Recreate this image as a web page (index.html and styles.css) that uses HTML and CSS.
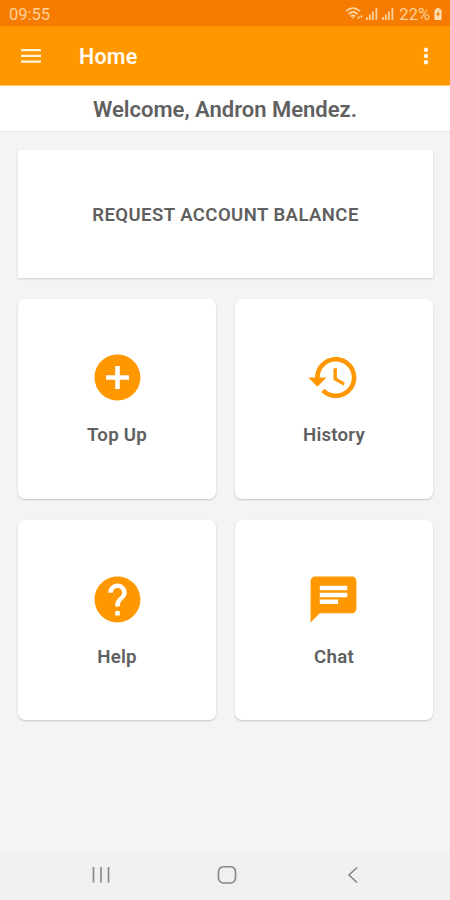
FILE: index.html
```
<!DOCTYPE html>
<html lang="en">
<head>
<meta charset="utf-8">
<title>Home</title>
<link rel="stylesheet" href="styles.css">
</head>
<body>
<div class="status">
  <span class="time">09:55</span>
  <div class="status-right">
    <svg width="20" height="16" viewBox="0 0 20 16" fill="none" stroke="currentColor" stroke-width="1.7"><path d="M1 5.2Q8 -1 15 5.2M3.5 8Q8 4 12.5 8M5.7 10.5Q8 8.5 10.3 10.5"/><path d="M7 11.3h2L8 13zM12 12.5l2-3 1 3zM15 9.5h3l-1.5 3z" fill="currentColor" stroke="none"/></svg>
    <svg width="14" height="16" viewBox="0 0 14 16" fill="currentColor"><path d="M1 11h1.800v3H1zM4 8.500h1.800V14H4zM7 5.500h1.800V14H7zM10.500 2h1.800v12h-1.800z"/></svg>
    <svg class="signal" width="14" height="16" viewBox="0 0 14 16" fill="currentColor"><path d="M1 11h1.800v3H1zM4 8.500h1.800V14H4zM7 5.500h1.800V14H7zM10.500 2h1.800v12h-1.800z"/></svg>
    <span class="percent">22%</span>
    <svg class="battery" width="10" height="14" viewBox="0 0 9 14"><path d="M3 1h3v1.500h2V13H1V2.500h2z" fill="#ffdfb5"/><path d="M5 3.500L2.700 8h1.500v2.500L6.400 6.500H5z" fill="#f57c00"/></svg>
  </div>
</div>
<header class="appbar">
  <svg class="menu" width="20" height="14" viewBox="0 0 20 14" fill="#fff4d8"><path d="M0 0h20v2.300H0zM0 5.700h20V8H0zM0 11.400h20v2.300H0z"/></svg>
  <h1>Home</h1>
  <svg class="more" width="6" height="18" viewBox="0 0 6 18" fill="#fff8e8"><circle cx="3" cy="2.700" r="2.200"/><circle cx="3" cy="9" r="2.200"/><circle cx="3" cy="15.300" r="2.200"/></svg>
</header>
<div class="welcome">Welcome, Andron Mendez.</div>
<main>
  <div class="request">REQUEST ACCOUNT BALANCE</div>
  <div class="grid">
    <div class="card">
      <svg class="icon" viewBox="0 0 24 24"><path d="M12 2C6.480 2 2 6.480 2 12s4.480 10 10 10 10-4.480 10-10S17.520 2 12 2zm5 11h-4v4h-2v-4H7v-2h4V7h2v4h4v2z"/></svg>
      <span class="topup">Top Up</span>
    </div>
    <div class="card">
      <svg class="icon" viewBox="0 0 24 24"><path d="M13 3c-4.970 0-9 4.030-9 9H1l3.890 3.890.07.14L9 12H6c0-3.870 3.130-7 7-7s7 3.130 7 7-3.130 7-7 7c-1.930 0-3.680-.79-4.940-2.060l-1.420 1.420C8.270 19.990 10.510 21 13 21c4.970 0 9-4.030 9-9s-4.030-9-9-9zm-1 5v5l4.280 2.540.72-1.210-3.500-2.080V8H12z"/></svg>
      <span>History</span>
    </div>
    <div class="card">
      <svg class="icon" viewBox="0 0 24 24"><path d="M12 2C6.480 2 2 6.480 2 12s4.480 10 10 10 10-4.480 10-10S17.520 2 12 2zm1 17h-2v-2h2v2zm2.070-7.750l-.9.920C13.450 12.900 13 13.500 13 15h-2v-.5c0-1.100.45-2.100 1.170-2.830l1.240-1.260c.37-.36.59-.86.59-1.410 0-1.100-.9-2-2-2s-2 .9-2 2H8c0-2.210 1.790-4 4-4s4 1.790 4 4c0 .88-.36 1.680-.93 2.250z"/></svg>
      <span>Help</span>
    </div>
    <div class="card">
      <svg class="icon" viewBox="0 0 24 24" preserveAspectRatio="none"><path d="M20 2H4c-1.100 0-1.990.9-1.990 2L2 22l4-4h14c1.100 0 2-.9 2-2V4c0-1.100-.9-2-2-2zM6 9h12v2H6V9zm8 5H6v-2h8v2zm4-6H6V6h12v2z"/></svg>
      <span>Chat</span>
    </div>
  </div>
</main>
<nav>
  <svg width="18" height="18" viewBox="0 0 18 18"><path d="M1.500 1v15.500M9 1v15.500M16.500 1v15.500"/></svg>
  <svg class="home" width="20" height="20" viewBox="0 0 20 20"><rect x="1.500" y="1.700" width="17" height="16.300" rx="5"/></svg>
  <svg width="12" height="18" viewBox="0 0 12 18"><path d="M10 1.500L2 9l8 7.500"/></svg>
</nav>
</body>
</html>
```
FILE: styles.css
```
* { box-sizing: border-box; }
body {
  margin: 0;
  height: 900px;
  display: flex;
  flex-direction: column;
  background: #f4f4f4;
  color: #606060;
  font-family: Roboto, sans-serif;
  overflow: hidden;
}
svg { display: block; flex: none; }
.status {
  height: 26px;
  background: #f57c00;
  color: #ffd09a;
  display: flex;
  align-items: center;
  justify-content: space-between;
  padding: 2px 7px 0 9px;
  font-size: 16.5px;
}
.status-right { display: flex; align-items: center; }
.signal { margin-left: 2px; }
.percent { margin: 0 3px 0 4px; }
.appbar {
  height: 59px;
  background: #ff9800;
  display: flex;
  align-items: center;
  padding: 1px 21px 0;
}
h1 {
  margin: 0 auto 0 38px;
  color: #fffaf0;
  font-size: 21.5px;
  font-weight: 600;
  letter-spacing: 0.2px;
}
.welcome {
  height: 47px;
  padding-top: 2px;
  background: #fff;
  border-top: 1px solid #ffc670;
  border-bottom: 1px solid #e6e6e6;
  text-align: center;
  font-size: 22px;
  line-height: 43px;
  font-weight: 600;
}
main {
  flex: 1;
  padding: 18px 17px 0 18px;
}
.request {
  height: 128px;
  display: flex;
  align-items: center;
  justify-content: center;
  background: #fff;
  box-shadow: 0 1px 2px #cfcfcf;
  font-size: 18.5px;
  letter-spacing: 0.45px;
  font-weight: 600;
  padding-top: 1px;
}
.grid {
  margin-top: 21px;
  display: grid;
  grid-template-columns: 198px 198px;
  grid-auto-rows: 200px;
  gap: 21px 19px;
}
.card {
  background: #fff;
  border-radius: 7px;
  box-shadow: 0 1px 2px #c4c4c4;
  display: flex;
  flex-direction: column;
  align-items: center;
  padding-top: 51px;
  font-size: 18.7px;
  letter-spacing: 0.2px;
  line-height: 24px;
  font-weight: 600;
}
.card:nth-child(n+3) { padding-top: 52px; }
.icon { width: 55px; height: 55px; fill: #ff9800; }
.card:nth-child(even) .icon { margin-right: 1px; }
.card span { margin-top: 18px; }
nav {
  height: 48px;
  background: #f0f0f0;
  display: flex;
  align-items: center;
  justify-content: space-between;
  padding: 0 91px 3px 92px;
}
nav svg { fill: none; stroke: #868686; stroke-width: 1.6; }
.home { margin-right: 4px; }
```
